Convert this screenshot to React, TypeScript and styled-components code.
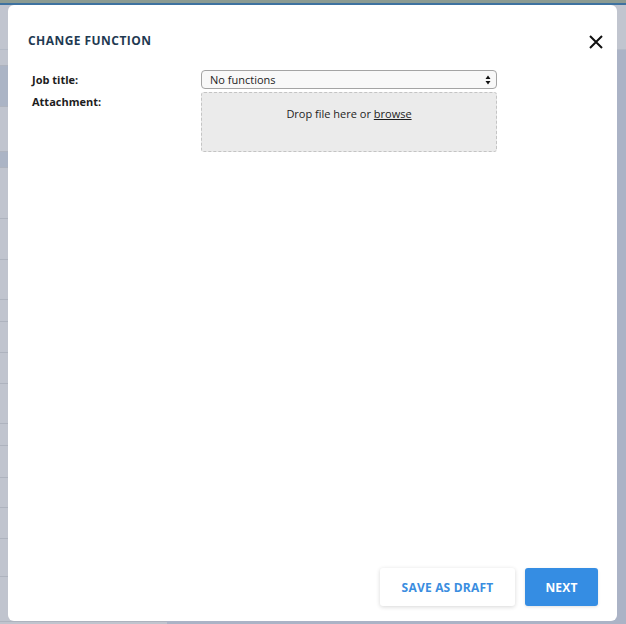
import React from "react";
import styled, { createGlobalStyle } from "styled-components";

const Global = createGlobalStyle`
  html, body { margin: 0; padding: 0; }
  body { font-family: "Open Sans", "Liberation Sans", sans-serif; background: #c0c4ce; }
  * { box-sizing: border-box; }
`;

const Page = styled.div`
  width: 626px;
  height: 624px;
  overflow: hidden;
  display: flex;
  flex-direction: column;
  background: #c0c4ce;
`;

const TopStrip = styled.div`
  height: 3px;
  background: #8c9b92;
  flex: none;
`;
const BlueStrip = styled.div`
  height: 2px;
  background: #3e72a0;
  flex: none;
`;
const HeaderBar = styled.div`
  height: 45px;
  flex: none;
  background: #c1c5cf;
  border-bottom: 1px solid #b4bac6;
`;
const Body = styled.div`
  flex: 1;
  display: flex;
`;
const Sidebar = styled.div`
  width: 167px;
  display: flex;
  flex-direction: column;
  background: #c0c4ce;
`;
const SideItem = styled.div<{ $h: number; $active?: boolean }>`
  height: ${(p) => p.$h}px;
  flex: none;
  background: ${(p) => (p.$active ? "#abb4c5" : "#c0c4ce")};
  border-bottom: 1px solid #aeb3be;
`;
const Main = styled.div`
  flex: 1;
  background: #abb3c6;
`;

const Modal = styled.div`
  position: fixed;
  left: 8px;
  top: 5px;
  width: 609px;
  height: 616px;
  background: #fff;
  border-radius: 6px;
  display: flex;
  flex-direction: column;
  padding: 0 19px 15px 20px;
`;

const Header = styled.div`
  display: flex;
  align-items: center;
  justify-content: space-between;
  height: 65px;
  padding: 5px 0 0 0;
`;
const Title = styled.h2`
  margin: 0;
  font-family: "Open Sans", sans-serif;
  font-size: 12px;
  font-weight: 700;
  letter-spacing: 0.45px;
  color: #1f3a52;
`;
const Close = styled.button`
  border: none;
  background: none;
  padding: 0;
  width: 16px;
  height: 16px;
  margin-right: -6px;
  margin-top: 4px;
  display: flex;
  cursor: pointer;
`;

const Form = styled.div`
  display: grid;
  grid-template-columns: 169px 296px;
  column-gap: 0;
  row-gap: 3px;
  padding-left: 4px;
`;
const Label = styled.div`
  font-size: 11px;
  font-weight: 700;
  color: #1d1d1d;
  line-height: 19px;
`;
const Select = styled.div`
  height: 19px;
  border: 1px solid #a4a4a4;
  border-radius: 4px;
  background: #f8f8f8;
  display: flex;
  align-items: center;
  justify-content: space-between;
  padding: 0 5px 0 8px;
  font-size: 11px;
  color: #1d1d1d;
`;
const Drop = styled.div`
  height: 60px;
  border: 1px dashed #c4c4c4;
  border-radius: 3px;
  background: #ebebeb;
  display: flex;
  justify-content: center;
  padding-top: 13px;
  font-size: 11px;
  color: #1d1d1d;
  line-height: 16px;
`;
const Browse = styled.span`
  text-decoration: underline;
`;

const Spacer = styled.div`
  flex: 1;
`;
const Footer = styled.div`
  display: flex;
  justify-content: flex-end;
  gap: 10px;
`;
const Button = styled.button<{ $primary?: boolean }>`
  height: 38px;
  border: none;
  border-radius: 3px;
  font-family: "Open Sans", sans-serif;
  font-size: 12px;
  font-weight: 700;
  letter-spacing: 0.2px;
  padding: 0;
  cursor: pointer;
  background: ${(p) => (p.$primary ? "#358de3" : "#fff")};
  color: ${(p) => (p.$primary ? "#fff" : "#3a8de0")};
  box-shadow: ${(p) =>
    p.$primary ? "0 1px 3px rgba(0,0,0,0.12)" : "0 1px 4px rgba(0,0,0,0.16)"};
`;
const DraftButton = styled(Button)`
  width: 135px;
`;
const NextButton = styled(Button)`
  width: 73px;
`;

export default function App() {
  const rows = [51, 41, 40, 22, 31, 31, 40, 22, 32, 30, 31, 38, 45];
  return (
    <>
      <Global />
      <Page>
        <TopStrip />
        <BlueStrip />
        <HeaderBar />
        <Body>
          <Sidebar>
            <SideItem $h={16} />
            <SideItem $h={41} $active />
            <SideItem $h={45} />
            <SideItem $h={16} $active />
            {rows.map((h, i) => (
              <SideItem key={i} $h={h} />
            ))}
          </Sidebar>
          <Main />
        </Body>
      </Page>
      <Modal>
        <Header>
          <Title>CHANGE FUNCTION</Title>
          <Close aria-label="Close">
            <svg width="16" height="16" viewBox="0 0 16 16">
              <path d="M2 2 L14 14 M14 2 L2 14" stroke="#111" strokeWidth="2" strokeLinecap="butt" />
            </svg>
          </Close>
        </Header>
        <Form>
          <Label>Job title:</Label>
          <Select>
            <span>No functions</span>
            <svg width="6" height="10" viewBox="0 0 6 10">
              <path d="M3 0.5 L5.5 4 H0.5 Z M3 9.5 L5.5 6 H0.5 Z" fill="#111" />
            </svg>
          </Select>
          <Label>Attachment:</Label>
          <Drop>
            <span>
              Drop file here or <Browse>browse</Browse>
            </span>
          </Drop>
        </Form>
        <Spacer />
        <Footer>
          <DraftButton>SAVE AS DRAFT</DraftButton>
          <NextButton $primary>NEXT</NextButton>
        </Footer>
      </Modal>
    </>
  );
}
